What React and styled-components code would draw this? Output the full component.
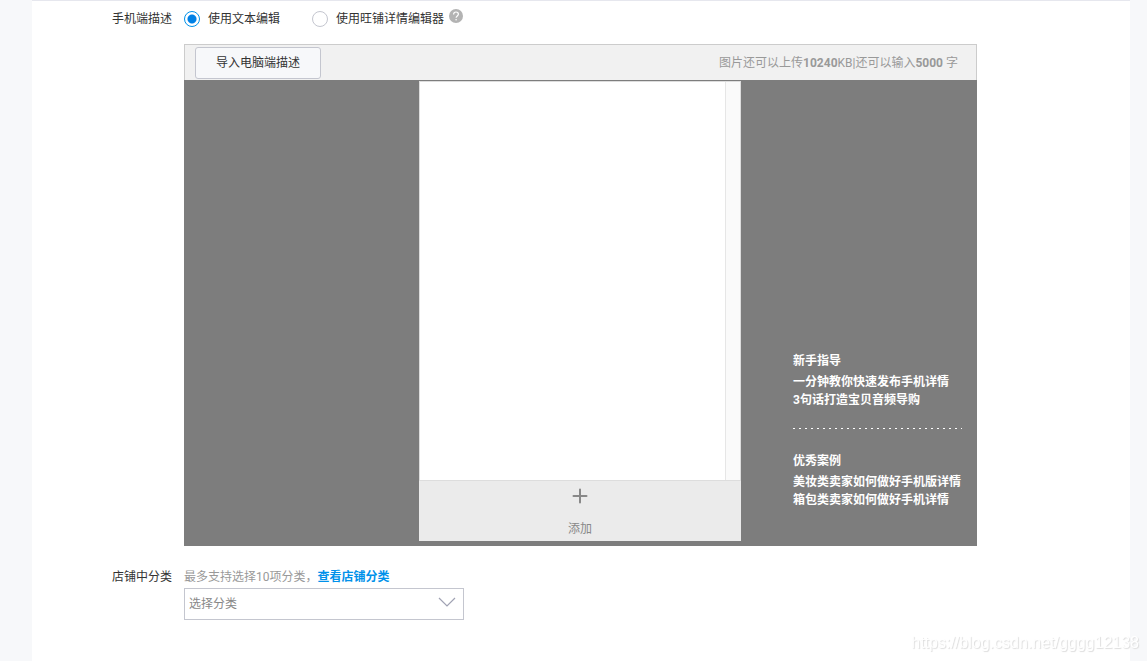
import React, { useState } from 'react'
import styled, { createGlobalStyle } from 'styled-components'

const GlobalStyle = createGlobalStyle`
  * {
    box-sizing: border-box;
  }

  body {
    margin: 0;
    background: #f7f8fa;
    color: #333;
    font-family: Roboto, "Noto Sans CJK SC", sans-serif;
    font-size: 12px;
    line-height: 18px;
  }

  button, select, input {
    font: inherit;
    color: inherit;
  }
`

const Page = styled.div`
  padding: 0 17px 0 32px;
`

const Panel = styled.main`
  min-height: 100vh;
  padding: 9px 0 40px 52px;
  background: white;
  border-top: 1px solid #e6e7ee;
`

const Row = styled.div`
  display: flex;
  align-items: flex-start;
  margin-bottom: ${({ $gap }) => $gap || 0}px;
`

const RowLabel = styled.div`
  flex: none;
  width: 88px;
  margin-right: 12px;
  text-align: right;
`

const Field = styled.div`
  flex: 1;
  min-width: 0;
`

const Options = styled.div`
  display: flex;
  align-items: flex-start;
  height: 18px;
`

const Option = styled.label`
  display: flex;
  align-items: center;
  margin-right: ${({ $last }) => ($last ? 5 : 32)}px;
  cursor: pointer;
`

const Radio = styled.input`
  appearance: none;
  width: 16px;
  height: 16px;
  margin: 0 8px 0 0;
  background: white;
  border: 1px solid #c4c6cf;
  border-radius: 50%;

  &:checked {
    background: radial-gradient(circle, #0080e5 4px, white 5px);
    border-color: #0091ea;
  }
`

const HelpIcon = styled.svg`
  display: block;
  width: 14px;
  height: 14px;
  margin-top: -1px;
`

const Editor = styled.section`
  max-width: 793px;
  margin-top: 16px;
`

const EditorHeader = styled.header`
  display: flex;
  align-items: center;
  justify-content: space-between;
  height: 36px;
  padding: 0 18px 0 10px;
  background: #f1f1f1;
  border: 1px solid #ccc;
  border-bottom: 0;
`

const ImportButton = styled.button`
  height: 32px;
  padding: 0 20px;
  background: #f7f8fa;
  border: 1px solid #c4c6cf;
  border-radius: 3px;
  cursor: pointer;
`

const Quota = styled.p`
  margin: 0;
  color: #999;
`

const Workspace = styled.div`
  display: grid;
  grid-template-columns: 235px 322px 1fr;
  padding: 1px 0 5px;
  background: #7d7d7d;
`

const Phone = styled.div`
  grid-column: 2;
`

const Canvas = styled.div`
  display: flex;
  justify-content: flex-end;
  height: 400px;
  background: white;
  border: 1px solid #ddd;
`

const ScrollTrack = styled.div`
  width: 15px;
  background: #fafafa;
  border-left: 1px solid #e6e6e6;
`

const AddButton = styled.button`
  display: flex;
  flex-direction: column;
  align-items: center;
  justify-content: space-between;
  width: 100%;
  height: 60px;
  padding: 7px 0 3px;
  background: #ebebeb;
  border: 0;
  color: #888;
  cursor: pointer;
`

const Guides = styled.aside`
  align-self: end;
  padding: 0 15px 32px 52px;
  color: white;
  font-weight: 700;
`

const GuideGroup = styled.div`
  & + & {
    margin-top: 19px;
    padding-top: 24px;
    background: repeating-linear-gradient(90deg, white 0 2px, transparent 2px 6px) top / 100% 1px no-repeat;
  }
`

const GuideTitle = styled.h3`
  margin: 0 0 3px;
  font-size: 12px;
  font-weight: 700;
`

const GuideLink = styled.a`
  display: block;
  color: inherit;
  text-decoration: none;
  white-space: nowrap;
`

const Hint = styled.p`
  margin: 0 0 2px;
  color: #999;
`

const ShopLink = styled.a`
  color: #0091ea;
  font-weight: 700;
  text-decoration: none;
`

const SelectBox = styled.div`
  position: relative;
  max-width: 280px;
`

const Select = styled.select`
  appearance: none;
  display: block;
  width: 100%;
  height: 32px;
  padding: 0 32px 0 4px;
  background: white;
  border: 1px solid #c4c6cf;
  border-radius: 0;
  color: #888;
`

const Chevron = styled.svg`
  position: absolute;
  top: 9px;
  right: 8px;
  width: 18px;
  height: 11px;
  pointer-events: none;
`

const Watermark = styled.div`
  position: fixed;
  right: 8px;
  bottom: 8px;
  color: white;
  font-family: "Liberation Sans", Arial, sans-serif;
  font-size: 16px;
  line-height: 20px;
  text-shadow: 1px 1px 1px #ddd;
`

const modes = [
  { id: 'text', label: '使用文本编辑' },
  { id: 'wangpu', label: '使用旺铺详情编辑器' }
]

const guides = [
  { title: '新手指导', links: ['一分钟教你快速发布手机详情', '3句话打造宝贝音频导购'] },
  { title: '优秀案例', links: ['美妆类卖家如何做好手机版详情', '箱包类卖家如何做好手机详情'] }
]

const App = () => {
  const [mode, setMode] = useState('text')

  return (
    <Page>
      <GlobalStyle />
      <Panel>
        <Row $gap={22}>
          <RowLabel id='mobile-desc'>手机端描述</RowLabel>
          <Field>
            <Options role='radiogroup' aria-labelledby='mobile-desc'>
              {modes.map(({ id, label }, i) => (
                <Option key={id} $last={i === modes.length - 1}>
                  <Radio
                    type='radio'
                    name='mode'
                    checked={mode === id}
                    onChange={() => setMode(id)}
                  />
                  {label}
                </Option>
              ))}
              <HelpIcon viewBox='0 0 14 14' aria-hidden='true'>
                <circle cx='7' cy='7' r='7' fill='#b3b3b3' />
                <path d='M4.6 5.4C4.6 3.9 5.6 3 7 3s2.4.9 2.4 2.2c0 1.7-2.3 1.8-2.3 3.6' fill='none' stroke='white' strokeWidth='1.2' />
                <circle cx='7.1' cy='10.8' r='.8' fill='white' />
              </HelpIcon>
            </Options>
            <Editor>
              <EditorHeader>
                <ImportButton type='button'>导入电脑端描述</ImportButton>
                <Quota>图片还可以上传<b>10240</b>KB|还可以输入<b>5000</b> 字</Quota>
              </EditorHeader>
              <Workspace>
                <Phone>
                  <Canvas>
                    <ScrollTrack />
                  </Canvas>
                  <AddButton type='button'>
                    <svg width='16' height='16' viewBox='0 0 16 16' aria-hidden='true'>
                      <path d='M8 1.5v13M1.5 8h13' stroke='#888' strokeWidth='2' strokeLinecap='round' />
                    </svg>
                    添加
                  </AddButton>
                </Phone>
                <Guides>
                  {guides.map(({ title, links }) => (
                    <GuideGroup key={title}>
                      <GuideTitle>{title}</GuideTitle>
                      {links.map(link => <GuideLink key={link} href='#'>{link}</GuideLink>)}
                    </GuideGroup>
                  ))}
                </Guides>
              </Workspace>
            </Editor>
          </Field>
        </Row>
        <Row>
          <RowLabel as='label' htmlFor='category'>店铺中分类</RowLabel>
          <Field>
            <Hint>最多支持选择10项分类，<ShopLink href='#'>查看店铺分类</ShopLink></Hint>
            <SelectBox>
              <Select id='category' defaultValue=''>
                <option value=''>选择分类</option>
              </Select>
              <Chevron viewBox='0 0 18 11' aria-hidden='true'>
                <path d='M1 1l8 8 8-8' fill='none' stroke='#a0a2b3' strokeWidth='1.2' />
              </Chevron>
            </SelectBox>
          </Field>
        </Row>
      </Panel>
      <Watermark>https://blog.csdn.net/gggg12138</Watermark>
    </Page>
  )
}

export default App
